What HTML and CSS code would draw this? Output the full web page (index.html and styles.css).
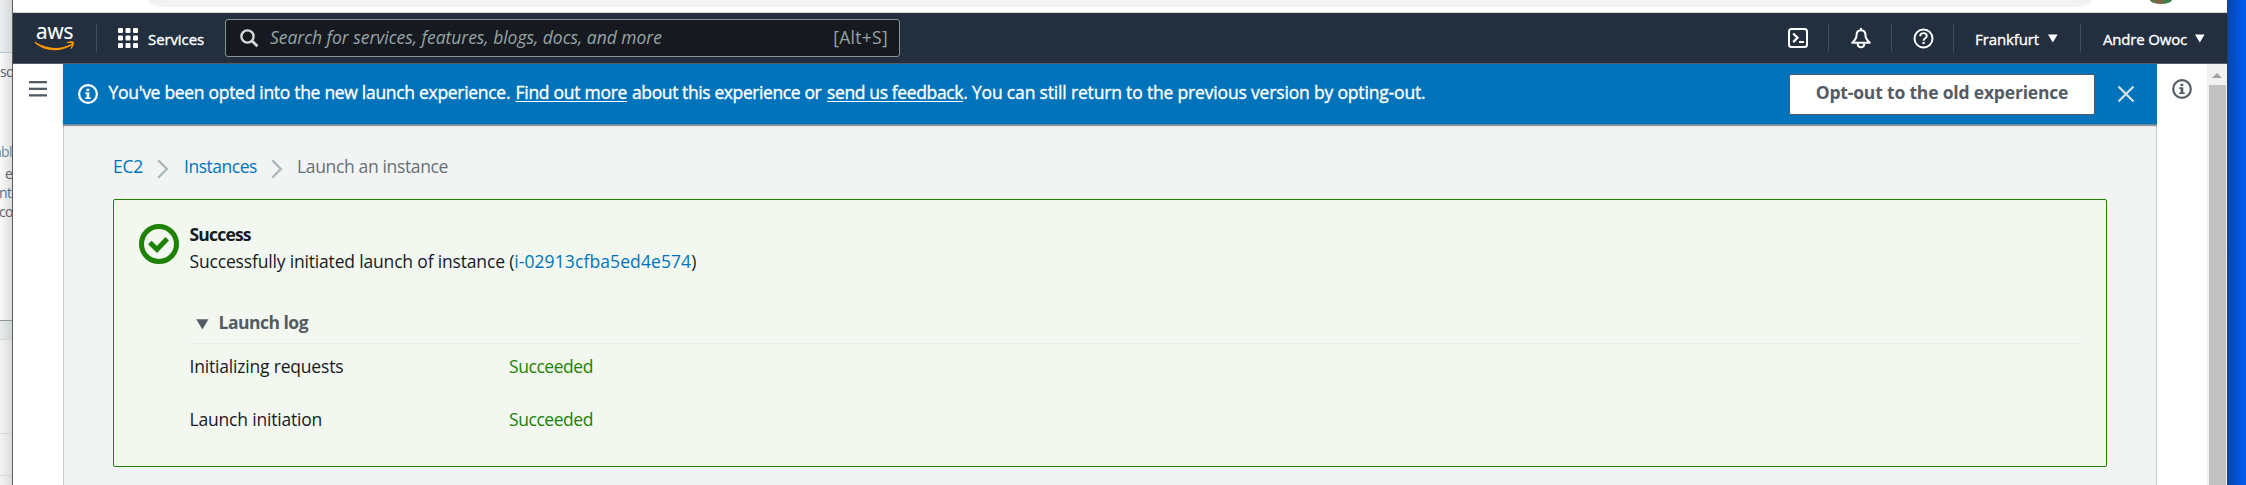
FILE: index.html
```html
<!DOCTYPE html>
<html lang="en">
<head>
<meta charset="utf-8">
<title>Launch an instance | EC2</title>
<link rel="stylesheet" href="styles.css">
</head>
<body>
<div class="desktop">
  <aside class="behind">
    <div class="behind-top"></div>
    <div class="behind-body">
      <p class="bt bt-so">so</p>
      <p class="bt bt-abl">abl</p>
      <p class="bt bt-e">e</p>
      <p class="bt bt-ntr">ntr</p>
      <p class="bt bt-cor">cor</p>
    </div>
    <div class="behind-row head"></div>
    <div class="behind-row mid"></div>
    <div class="behind-row low"></div>
    <div class="behind-row end"></div>
  </aside>
  <div class="window">
    <div class="browser-bar"><div class="omnibox"></div><div class="avatar"></div></div>
    <header class="nav">
      <svg class="logo" width="44" height="30" viewBox="0 0 44 30">
        <text class="logo-text" x="3" y="15" textLength="37.5" lengthAdjust="spacingAndGlyphs">aws</text>
        <path d="M2.2 17.8C13 25.3 28 25.6 37.6 20.2c1-.5 1.8.6.8 1.3C27 28.8 11 27.400 2 19c-.7-.7-.4-1.500.2-1.200z" fill="#f90"/>
        <path d="M33.800 18.300c2.500-1.500 6-1.400 6.900-.6.8.9-.1 5.100-2.500 7.200-.4.3-.8.1-.6-.4.6-1.500 1.500-4.300 1-5-.5-.6-3-.5-4.500-.4-.5 0-.7-.4-.3-.8z" fill="#f90"/>
      </svg>
      <i class="divider"></i>
      <svg class="grid-icon" width="20" height="20" viewBox="0 0 20 20" fill="#fff">
        <rect width="5" height="5" rx="1"/><rect x="7.500" width="5" height="5" rx="1"/><rect x="15" width="5" height="5" rx="1"/>
        <rect y="7.500" width="5" height="5" rx="1"/><rect x="7.500" y="7.500" width="5" height="5" rx="1"/><rect x="15" y="7.500" width="5" height="5" rx="1"/>
        <rect y="15" width="5" height="5" rx="1"/><rect x="7.500" y="15" width="5" height="5" rx="1"/><rect x="15" y="15" width="5" height="5" rx="1"/>
      </svg>
      <span class="services">Services</span>
      <div class="search">
        <svg width="19" height="19" viewBox="0 0 19 19" fill="none" stroke="#d5dbdb" stroke-width="2.400"><circle cx="7.500" cy="7.500" r="6.100"/><path d="M12 12l5.500 5.200" stroke-width="2.800"/></svg>
        <span class="placeholder">Search for services, features, blogs, docs, and more</span>
        <span class="shortcut">[Alt+S]</span>
      </div>
      <div class="tools">
        <div class="tool terminal">
          <svg width="20" height="20" viewBox="0 0 20 20" fill="none" stroke="#fff" stroke-width="2"><rect x="1" y="1" width="18" height="18" rx="2.500"/><path d="M5.200 5.500L9.500 9.800l-4.300 4.300" stroke-width="2.300"/><path d="M11 14h5"/></svg>
        </div>
        <i class="divider"></i>
        <div class="tool bell">
          <svg width="20" height="21" viewBox="0 0 20 21" fill="none" stroke="#fff" stroke-width="2" stroke-linejoin="round"><path d="M10 2.200C6.600 2.200 5.500 5 5.500 7.500c0 3.200-1.800 5-4.300 7.300h17.600c-2.500-2.300-4.300-4.100-4.300-7.300 0-2.500-1.100-5.300-4.500-5.300z"/><path d="M10 0v2.500M6.700 15.500c0 2.200 1.300 3.700 3.300 3.700s3.300-1.500 3.300-3.700"/></svg>
        </div>
        <i class="divider"></i>
        <div class="tool help">
          <svg width="21" height="21" viewBox="0 0 21 21" fill="none" stroke="#fff" stroke-width="2"><circle cx="10.500" cy="10.500" r="9"/><path d="M7.200 8.300c0-2 1.300-3.200 3.300-3.200s3.300 1.100 3.300 2.900c0 2.300-3.200 2.300-3.200 4.700" stroke-width="1.900"/><path d="M9.500 13.900h2.200v2.100H9.500z" fill="#fff" stroke="none"/></svg>
        </div>
        <i class="divider"></i>
        <div class="tool region"><span class="frankfurt">Frankfurt</span><svg width="10" height="9" viewBox="0 0 10 9"><path d="M0 .5h9.600L4.800 8.500z" fill="#fff"/></svg></div>
        <i class="divider"></i>
        <div class="tool account"><span class="user">Andre Owoc</span><svg width="10" height="9" viewBox="0 0 10 9"><path d="M0 .5h9.600L4.800 8.500z" fill="#fff"/></svg></div>
      </div>
    </header>
    <div class="app">
      <nav class="side-left"><svg width="18" height="16" viewBox="0 0 18 16" fill="#545b64"><rect width="18" height="2.300"/><rect y="6.700" width="18" height="2.300"/><rect y="13.200" width="18" height="2.300"/></svg></nav>
      <main class="content">
        <section class="flash">
          <svg class="info" width="20" height="20" viewBox="0 0 20 20"><circle cx="10" cy="10" r="8.900" fill="none" stroke="#fff" stroke-width="2.200"/><path d="M8.500 4.800h2.800v2.300H8.500zM7.300 8.300h4v5.100h1.500v1.700H7.200v-1.700h1.400V10H7.300z" fill="#fff"/></svg>
          <p class="flash-text"><span class="f1">You've been opted into the new launch experience.</span><a class="f2">Find out more</a><span class="f3">about this experience or</span><a class="f4">send us feedback</a><span class="f5">. You can still return to the previous version by opting-out.</span></p>
          <button class="opt-out">Opt-out to the old experience</button>
          <svg class="close" width="18" height="18" viewBox="0 0 18 18"><path d="M1.500 1.500l15 15M16.500 1.500l-15 15" stroke="#d5e3ec" stroke-width="2.200"/></svg>
        </section>
        <div class="crumbs">
          <a class="c1">EC2</a>
          <svg width="12" height="20" viewBox="0 0 12 20"><path d="M1.200 1.300L9.800 10l-8.600 8.700" fill="none" stroke="#aab7b8" stroke-width="2.300"/></svg>
          <a class="c2">Instances</a>
          <svg width="12" height="20" viewBox="0 0 12 20"><path d="M1.200 1.300L9.800 10l-8.600 8.700" fill="none" stroke="#aab7b8" stroke-width="2.300"/></svg>
          <span class="c3">Launch an instance</span>
        </div>
        <section class="alert">
          <svg class="check" width="40" height="40" viewBox="0 0 40 40" fill="none" stroke="#1d8102"><circle cx="20" cy="20" r="17.500" stroke-width="5"/><path d="M10.800 18.500l7.200 7L28.200 14.800" stroke-width="5"/></svg>
          <div class="alert-body">
            <h2>Success</h2>
            <p class="summary"><span class="s1">Successfully initiated launch of instance (</span><a>i-02913cfba5ed4e574</a>)</p>
            <div class="log-head"><svg width="13" height="11" viewBox="0 0 13 11"><path d="M.3.300h12.200L6.400 10.500z" fill="#545b64"/></svg><span>Launch log</span></div>
            <div class="log-row"><span class="l1">Initializing requests</span><span class="ok">Succeeded</span></div>
            <div class="log-row"><span class="l2">Launch initiation</span><span class="ok">Succeeded</span></div>
          </div>
        </section>
      </main>
      <aside class="side-right"><svg width="20" height="20" viewBox="0 0 20 20"><circle cx="10" cy="10" r="8.800" fill="none" stroke="#545b64" stroke-width="2.200"/><path d="M8.500 4.800h2.800v2.300H8.500zM7.300 8.300h4v5.100h1.500v1.700H7.200v-1.700h1.400V10H7.300z" fill="#545b64"/></svg></aside>
      <div class="scrollbar"><svg width="10" height="5" viewBox="0 0 10 5"><path d="M0 5L5 0l5 5z" fill="#a3a3a3"/></svg><div class="thumb"></div></div>
    </div>
  </div>
  <div class="wallpaper"></div>
</div>
</body>
</html>
```
FILE: styles.css
```css
* { box-sizing: border-box; }
body { margin: 0; font: 17.5px/24px "Open Sans", "Noto Sans", sans-serif; color: #16191f; overflow: hidden; }
p, h2 { margin: 0; }
a { color: #0073bb; }
svg { display: block; flex: none; }
.desktop { display: flex; width: 2246px; height: 485px; }

/* Window partly hidden at the left edge */
.behind { width: 12px; flex: none; overflow: hidden; background: #f8f8f8; }
.behind-top { height: 53px; background: linear-gradient(90deg, #edf0f0, #d5d7d8); border-bottom: 1px solid #b5c5d3; }
.behind-body { height: 267px; padding-top: 9px; background: linear-gradient(90deg, #fafafa, #dedede); font-size: 14px; line-height: 20px; color: #5b6168; }
.bt { height: 20px; white-space: nowrap; letter-spacing: -.7px; }
.bt-so { margin-bottom: 60px; }
.bt-abl { margin: 0 0 2px -6px; color: #6e8797; }
.bt-e { padding-left: 5px; }
.bt-ntr { color: #4e7190; margin: -1px 0 0 -1px; }
.bt-cor { margin: -1px 0 0 -1px; }
.behind-row { background: linear-gradient(90deg, #f5f5f5, #dcdcdc); border-bottom: 1px solid #d0d5d7; }
.behind-row.head { height: 20px; border-top: 1px solid #879596; background: linear-gradient(90deg, #e9ecec, #d0d3d3); }
.behind-row.mid { height: 94px; }
.behind-row.low { height: 42px; }
.behind-row.end { height: 9px; border: 0; }

.window { width: 2216px; flex: none; background: #fff; border-left: 1px solid #5c5c5c; border-right: 1px solid #26415f; }
.browser-bar { height: 13px; display: flex; border-bottom: 1px solid #d6d7d9; }
.omnibox { width: 1944px; height: 7px; margin-left: 135px; background: #f1f3f4; border-radius: 0 0 18px 18px / 0 0 7px 7px; }
.avatar { width: 22px; height: 4px; margin-left: 58px; border-radius: 0 0 11px 11px / 0 0 4px 4px; background: linear-gradient(90deg, #567448 20%, #9b5443 45%, #3f7d48 65%); }

.nav { height: 51px; display: flex; align-items: center; background: #232f3e; border-bottom: 1px solid #545b64; color: #fff; font-size: 15px; }
.logo { margin: 2px 0 0 20px; overflow: visible; }
.logo-text { font: 500 22px "Open Sans", sans-serif; fill: #fff; stroke: #fff; stroke-width: .2px; }
.divider { width: 1px; height: 28px; flex: none; background: #414d5c; }
.logo + .divider { margin-left: 19px; }
.grid-icon { margin-left: 21px; }
.services, .frankfurt, .user { -webkit-text-stroke: .35px #fff; }
.services { width: 77px; margin: 1px 0 0 10px; letter-spacing: -.1px; }
.search { width: 675px; height: 38px; flex: none; display: flex; align-items: center; background: #16191f; border: 1px solid #879596; border-radius: 3px; color: #95a5a6; font-size: 17.500px; }
.search svg { margin-left: 14px; }
.placeholder { margin: -2px 0 0 11px; font-style: italic; letter-spacing: -.04px; white-space: nowrap; }
.shortcut { margin: -2px 11px 0 auto; letter-spacing: .3px; }
.tools { display: flex; align-items: center; margin-left: auto; }
.tool { display: flex; align-items: center; }
.terminal { width: 40px; }
.bell { width: 62px; padding-left: 22px; }
.help { width: 61px; padding-left: 21px; }
.region { width: 126px; padding-left: 21px; }
.account { width: 146px; padding-left: 22px; }
.frankfurt, .user { margin-top: 1px; white-space: nowrap; }
.frankfurt { width: 73px; letter-spacing: -.1px; }
.user { width: 92px; letter-spacing: -.18px; }

.app { display: flex; height: 421px; }
.side-left { width: 50px; padding: 17px 0 0 16px; background: #fff; }
.content { width: 2094px; background: #f2f3f3; box-shadow: inset 1px 0 #c3c8ca, inset -1px 0 #c3cacd; }
.flash { height: 61px; display: flex; align-items: center; background: #0073bb; border-bottom: 1px solid #6b8798; box-shadow: 0 1px 1px rgba(0,28,36,.4); color: #fff; }
.info { margin-left: 15px; }
.flash-text { display: flex; margin: -4px 0 0 10.500px; white-space: nowrap; -webkit-text-stroke: .35px #fff; font-weight: 500; }
.flash-text a { color: #fff; text-decoration: underline; text-underline-offset: 2px; text-decoration-thickness: 1px; }
.f1 { width: 407px; letter-spacing: -.3px; }
.f2 { letter-spacing: -.28px; margin-right: 5px; }
.f3 { width: 195px; letter-spacing: -.4px; }
.f4 { letter-spacing: -.37px; }
.f5 { letter-spacing: -.17px; }
.opt-out { width: 306px; height: 41px; margin-left: auto; padding: 0 0 4px; border: 1px solid #545b64; border-radius: 2px; background: #fff; color: #545b64; font: 700 17.500px/24px "Open Sans", sans-serif; letter-spacing: -.18px; white-space: nowrap; }
.close { margin: 0 22px; }

.crumbs { display: flex; align-items: center; height: 24px; margin: 29px 0 0 50px; }
.crumbs svg { margin: 5px 15px 0 0; }
.c1 { width: 44px; letter-spacing: -.3px; }
.c2 { width: 87px; letter-spacing: -.47px; }
.c3 { color: #687078; margin-left: -1px; letter-spacing: -.35px; }

.alert { display: flex; width: 1994px; height: 268px; margin: 21px 0 0 50px; border: 1px solid #1d8102; border-radius: 2px; background: #f2f8f0; }
.check { margin: 24px 0 0 25px; }
.alert-body { width: 1892px; margin-left: 10.500px; padding-top: 21px; }
h2 { font-size: 17.500px; line-height: 27px; font-weight: 700; letter-spacing: -.8px; }
.summary { line-height: 27px; white-space: nowrap; }
.s1 { letter-spacing: -.17px; }
.summary a { letter-spacing: .1px; }
.log-head { display: flex; align-items: center; height: 42px; margin-top: 27px; padding: 1px 0 0 6px; border-bottom: 1px solid #eaeded; font-weight: 700; color: #545b64; letter-spacing: -.5px; }
.log-head svg { margin-top: 2px; }
.log-head span { margin: -2px 0 0 10px; }
.log-row { display: flex; height: 53px; padding-top: 10px; }
.l1, .l2 { width: 319.500px; letter-spacing: -.19px; }
.ok { color: #1d8102; letter-spacing: -.44px; }

.side-right { width: 50px; padding: 15px 0 0 15px; background: #fff; }
.scrollbar { width: 20px; display: flex; flex-direction: column; align-items: center; padding-top: 9px; background: #f1f1f1; }
.thumb { width: 17px; flex: 1; margin-top: 7px; background: #c1c1c1; }
.wallpaper { width: 18px; flex: none; background: linear-gradient(90deg, #0548b3, #0356e4 75%, #005dea); }
```
